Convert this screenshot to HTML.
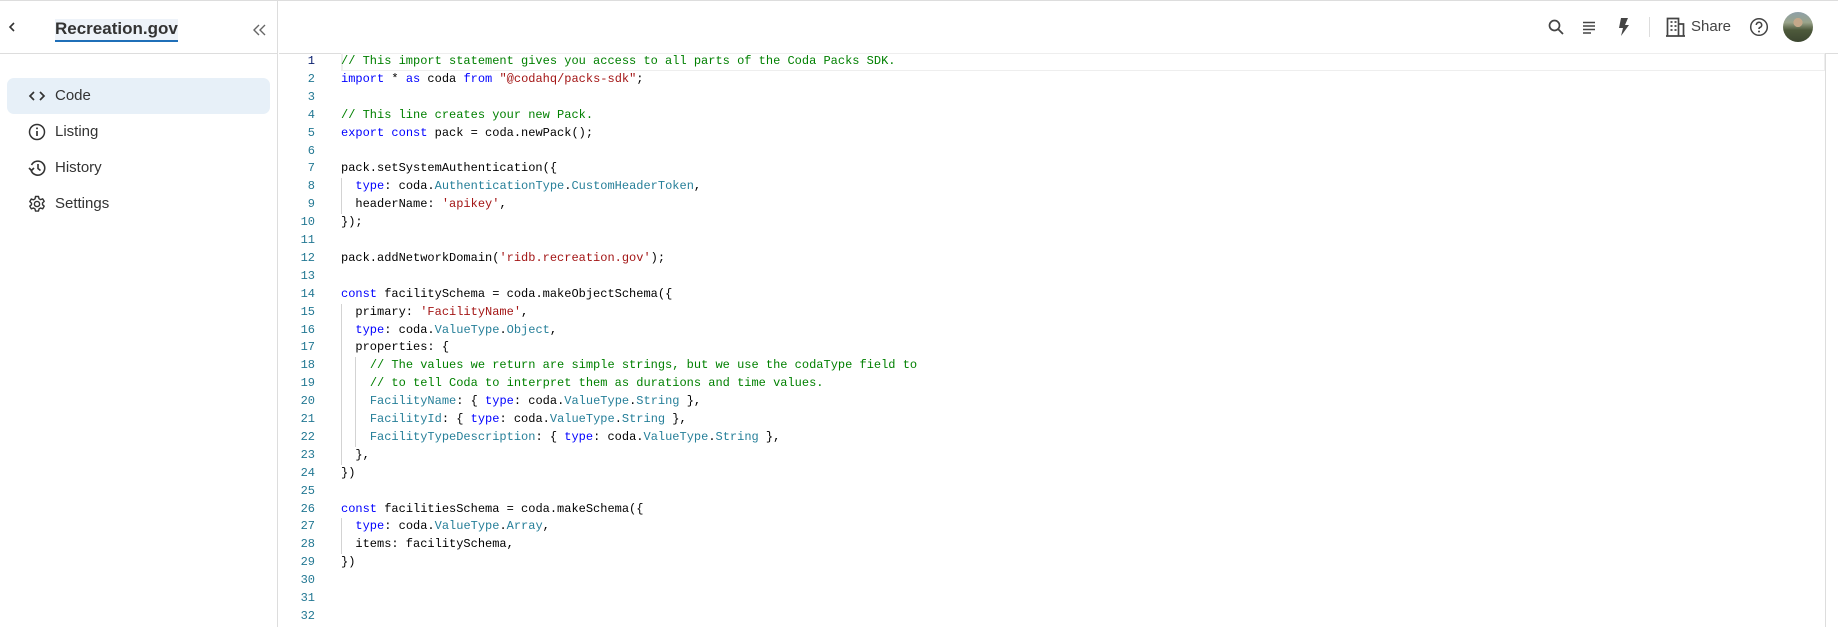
<!DOCTYPE html>
<html><head><meta charset="utf-8"><style>
*{margin:0;padding:0;box-sizing:border-box}
body{width:1838px;height:627px;overflow:hidden;background:#fff;font-family:"Liberation Sans",sans-serif;position:relative;color:#333}
.topline{position:absolute;left:0;top:0;width:1838px;height:1px;background:#ddd}
.side{position:absolute;left:0;top:0;width:278px;height:627px;border-right:1px solid #ddd}
.shead{position:absolute;left:0;top:0;width:278px;height:54px;border-bottom:1px solid #ddd}
.title{position:absolute;left:55px;top:19px;font-size:17px;font-weight:bold;color:#333;border-bottom:2px solid #1f6fb8;background:#eef3f9;line-height:20px;padding-bottom:1px}
.nav{position:absolute;left:7px;width:263px;height:36px;border-radius:7px;font-size:15px;color:#333}
.nav span{position:absolute;left:48px;top:9px}
.nav svg{position:absolute;left:21px;top:9px}
.act{background:#e7f0f8}
.top-ic{position:absolute}
.ln{position:absolute;height:17.9px;line-height:17.9px;white-space:pre}
.num{color:#237893;text-align:right;width:36px;left:0}
.txt{left:62px;color:#000}
.k{color:#0000ff}.c{color:#008000}.s{color:#a31515}.t{color:#267f99}
.guide{position:absolute;width:1px;background:#d3d3d3}
</style></head><body>
<div class="topline"></div>
<div class="side">
 <div class="shead">
  <svg style="position:absolute;left:6px;top:20px" width="12" height="14" viewBox="0 0 12 14"><path d="M8 3L4 7l4 4" fill="none" stroke="#333" stroke-width="1.6"/></svg>
  <div class="title">Recreation.gov</div>
  <svg style="position:absolute;left:251px;top:23px" width="16" height="14" viewBox="0 0 16 14"><path d="M8 2L3 7l5 5M14 2L9 7l5 5" fill="none" stroke="#666" stroke-width="1.4"/></svg>
 </div>
 <div class="nav act" style="top:78px"><svg width="18" height="18" viewBox="0 0 18 18"><path d="M6 5L2 9l4 4M12 5l4 4-4 4" fill="none" stroke="#333" stroke-width="1.7"/></svg><span>Code</span></div>
 <div class="nav" style="top:114px"><svg width="18" height="18" viewBox="0 0 18 18"><circle cx="9" cy="9" r="7.5" fill="none" stroke="#333" stroke-width="1.5"/><path d="M9 8v5" stroke="#333" stroke-width="1.7"/><circle cx="9" cy="5.4" r="1" fill="#333"/></svg><span>Listing</span></div>
 <div class="nav" style="top:150px"><svg width="18" height="18" viewBox="0 0 18 18"><path d="M3.5 6A7 7 0 1 1 3 11" fill="none" stroke="#333" stroke-width="1.6"/><path d="M1 9l2.5 2.5L6 9" fill="none" stroke="#333" stroke-width="1.6"/><path d="M10 5v4.5l2.5 2" fill="none" stroke="#333" stroke-width="1.6"/></svg><span>History</span></div>
 <div class="nav" style="top:186px"><svg width="18" height="18" viewBox="0 0 18 18"><path d="M7.5 1.5h3l.5 2.2 1.6.9 2.1-.8 1.5 2.6-1.7 1.5v1.8l1.7 1.5-1.5 2.6-2.1-.8-1.6.9-.5 2.2h-3l-.5-2.2-1.6-.9-2.1.8-1.5-2.6 1.7-1.5V8.1L1.8 6.6l1.5-2.6 2.1.8 1.6-.9z" fill="none" stroke="#333" stroke-width="1.4" stroke-linejoin="round"/><circle cx="9" cy="9" r="2.6" fill="none" stroke="#333" stroke-width="1.4"/></svg><span>Settings</span></div>
</div>
<div style="position:absolute;left:279px;top:53px;width:1559px;height:1px;background:#ddd"></div>
<svg class="top-ic" style="left:1547px;top:18px" width="18" height="18" viewBox="0 0 18 18"><circle cx="7.5" cy="7.5" r="5" fill="none" stroke="#444" stroke-width="1.7"/><path d="M11 11l5 5" stroke="#444" stroke-width="1.8"/></svg>
<svg class="top-ic" style="left:1581px;top:19px" width="16" height="16" viewBox="0 0 16 16"><path d="M2 3.5h12M2 7h12M2 10.5h12M2 14h8" stroke="#444" stroke-width="1.4"/></svg>
<svg class="top-ic" style="left:1617px;top:17px" width="14" height="20" viewBox="0 0 14 20"><path d="M4 1h7L8 8h4L4 19l2-8H2z" fill="#444"/></svg>
<div style="position:absolute;left:1649px;top:17px;width:1px;height:20px;background:#ddd"></div>
<svg class="top-ic" style="left:1666px;top:17px" width="19" height="20" viewBox="0 0 19 20"><path d="M1.5 19V1.5h11V19M12.5 7h5v12M0 19h19" fill="none" stroke="#444" stroke-width="1.7"/><path d="M4.5 5h2M8.5 5h2M4.5 9h2M8.5 9h2M4.5 13h2M8.5 13h2" stroke="#444" stroke-width="1.8"/></svg>
<div style="position:absolute;left:1691px;top:18px;font-size:15px;color:#444">Share</div>
<svg class="top-ic" style="left:1749px;top:17px" width="20" height="20" viewBox="0 0 20 20"><circle cx="10" cy="10" r="8.3" fill="none" stroke="#444" stroke-width="1.5"/><path d="M7.3 8a2.7 2.7 0 1 1 3.6 2.5c-.7.3-.9.8-.9 1.5" fill="none" stroke="#444" stroke-width="1.6"/><circle cx="10" cy="14.5" r="1" fill="#444"/></svg>
<div style="position:absolute;left:1783px;top:12px;width:30px;height:30px;border-radius:50%;background:radial-gradient(circle at 50% 35%,#c4a88a 0 18%,transparent 19%),linear-gradient(180deg,#8ea0a8 0%,#9aa48a 35%,#4e5a3c 60%,#3c4630 100%)"></div>
<div style="position:absolute;left:341px;top:53px;width:1484px;height:18px;border:1px solid #eee;border-left:2px solid #eee"></div>
<div style="position:absolute;left:1825px;top:53px;width:1px;height:574px;background:#ddd"></div>
<div class="guide" style="left:341px;top:178px;height:36px"></div>
<div class="guide" style="left:341px;top:304px;height:161px"></div>
<div class="guide" style="left:355px;top:357px;height:90px"></div>
<div class="guide" style="left:341px;top:518px;height:36px"></div>
<div style="position:absolute;left:279px;top:53px;font-family:'Liberation Mono',monospace;font-size:12px">
<div class="ln num" style="top:0;color:#0b216f">1</div><div class="ln txt" style="top:0"><span class="c">// This import statement gives you access to all parts of the Coda Packs SDK.</span></div>
<div class="ln num" style="top:17.9px">2</div><div class="ln txt" style="top:17.9px"><span class="k">import</span> * <span class="k">as</span> coda <span class="k">from</span> <span class="s">"@codahq/packs-sdk"</span>;</div>
<div class="ln num" style="top:35.8px">3</div>
<div class="ln num" style="top:53.7px">4</div><div class="ln txt" style="top:53.7px"><span class="c">// This line creates your new Pack.</span></div>
<div class="ln num" style="top:71.6px">5</div><div class="ln txt" style="top:71.6px"><span class="k">export</span> <span class="k">const</span> pack = coda.newPack();</div>
<div class="ln num" style="top:89.5px">6</div>
<div class="ln num" style="top:107.4px">7</div><div class="ln txt" style="top:107.4px">pack.setSystemAuthentication({</div>
<div class="ln num" style="top:125.3px">8</div><div class="ln txt" style="top:125.3px">  <span class="k">type</span>: coda.<span class="t">AuthenticationType</span>.<span class="t">CustomHeaderToken</span>,</div>
<div class="ln num" style="top:143.2px">9</div><div class="ln txt" style="top:143.2px">  headerName: <span class="s">'apikey'</span>,</div>
<div class="ln num" style="top:161.1px">10</div><div class="ln txt" style="top:161.1px">});</div>
<div class="ln num" style="top:179px">11</div>
<div class="ln num" style="top:196.9px">12</div><div class="ln txt" style="top:196.9px">pack.addNetworkDomain(<span class="s">'ridb.recreation.gov'</span>);</div>
<div class="ln num" style="top:214.8px">13</div>
<div class="ln num" style="top:232.7px">14</div><div class="ln txt" style="top:232.7px"><span class="k">const</span> facilitySchema = coda.makeObjectSchema({</div>
<div class="ln num" style="top:250.6px">15</div><div class="ln txt" style="top:250.6px">  primary: <span class="s">'FacilityName'</span>,</div>
<div class="ln num" style="top:268.5px">16</div><div class="ln txt" style="top:268.5px">  <span class="k">type</span>: coda.<span class="t">ValueType</span>.<span class="t">Object</span>,</div>
<div class="ln num" style="top:286.4px">17</div><div class="ln txt" style="top:286.4px">  properties: {</div>
<div class="ln num" style="top:304.3px">18</div><div class="ln txt" style="top:304.3px">    <span class="c">// The values we return are simple strings, but we use the codaType field to</span></div>
<div class="ln num" style="top:322.2px">19</div><div class="ln txt" style="top:322.2px">    <span class="c">// to tell Coda to interpret them as durations and time values.</span></div>
<div class="ln num" style="top:340.1px">20</div><div class="ln txt" style="top:340.1px">    <span class="t">FacilityName</span>: { <span class="k">type</span>: coda.<span class="t">ValueType</span>.<span class="t">String</span> },</div>
<div class="ln num" style="top:358px">21</div><div class="ln txt" style="top:358px">    <span class="t">FacilityId</span>: { <span class="k">type</span>: coda.<span class="t">ValueType</span>.<span class="t">String</span> },</div>
<div class="ln num" style="top:375.9px">22</div><div class="ln txt" style="top:375.9px">    <span class="t">FacilityTypeDescription</span>: { <span class="k">type</span>: coda.<span class="t">ValueType</span>.<span class="t">String</span> },</div>
<div class="ln num" style="top:393.8px">23</div><div class="ln txt" style="top:393.8px">  },</div>
<div class="ln num" style="top:411.7px">24</div><div class="ln txt" style="top:411.7px">})</div>
<div class="ln num" style="top:429.6px">25</div>
<div class="ln num" style="top:447.5px">26</div><div class="ln txt" style="top:447.5px"><span class="k">const</span> facilitiesSchema = coda.makeSchema({</div>
<div class="ln num" style="top:465.4px">27</div><div class="ln txt" style="top:465.4px">  <span class="k">type</span>: coda.<span class="t">ValueType</span>.<span class="t">Array</span>,</div>
<div class="ln num" style="top:483.3px">28</div><div class="ln txt" style="top:483.3px">  items: facilitySchema,</div>
<div class="ln num" style="top:501.2px">29</div><div class="ln txt" style="top:501.2px">})</div>
<div class="ln num" style="top:519.1px">30</div>
<div class="ln num" style="top:537px">31</div>
<div class="ln num" style="top:554.9px">32</div>
</div>
</body></html>
